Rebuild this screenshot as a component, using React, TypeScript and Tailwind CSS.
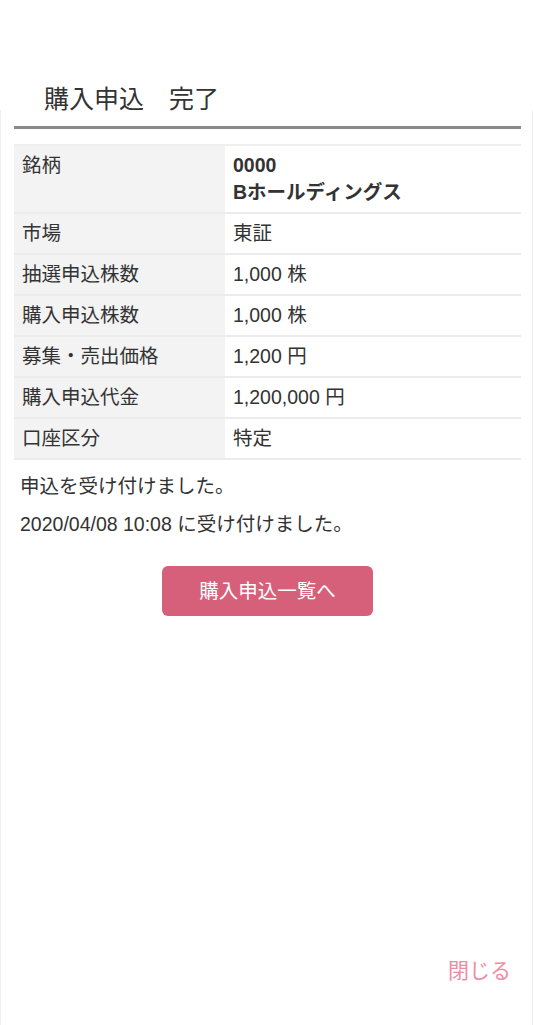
import React from 'react';

interface Row {
  label: string;
  value: React.ReactNode;
}

const rows: Row[] = [
  {
    label: '銘柄',
    value: (
      <span className="font-bold">
        0000
        <br />
        Bホールディングス
      </span>
    ),
  },
  { label: '市場', value: '東証' },
  { label: '抽選申込株数', value: '1,000 株' },
  { label: '購入申込株数', value: '1,000 株' },
  { label: '募集・売出価格', value: '1,200 円' },
  { label: '購入申込代金', value: '1,200,000 円' },
  { label: '口座区分', value: '特定' },
];

const font = { fontFamily: '"Liberation Sans", "Noto Sans CJK JP", sans-serif' };

export default function App() {
  return (
    <div className="min-h-[1025px] bg-white flex flex-col text-[#333]" style={font}>
      {/* Title */}
      <div className="h-[110px] pt-[84px] pl-[44px]">
        <h1 className="text-[25px] leading-[30px] font-normal text-[#333]">購入申込　完了</h1>
      </div>

      {/* Panel */}
      <div className="flex-1 flex flex-col border-x border-[#efefef] pl-[13px] pr-[11px]">
        <div className="mt-[16px] h-[3px] bg-[#8a8a8a]" />

        <div className="mt-[15px] border-t-2 border-[#efefef]">
          {rows.map(r => (
            <div key={r.label} className="grid grid-cols-[211px_1fr] border-b-2 border-[#ececec]">
              <div className="bg-[#f3f3f3] px-[8px] py-[6px] text-[19.5px] leading-[27px]">{r.label}</div>
              <div className="bg-white px-[8px] py-[6px] text-[19.5px] leading-[27px]">{r.value}</div>
            </div>
          ))}
        </div>

        {/* Messages */}
        <div className="mt-[13px] flex flex-col gap-[11px] px-[6px] text-[19.5px] leading-[27px]">
          <p>申込を受け付けました。</p>
          <p>2020/04/08 10:08 に受け付けました。</p>
        </div>

        <div className="mt-[28px] flex justify-center">
          <button className="w-[211px] h-[50px] rounded-[6px] bg-[#d6607a] text-white text-[19.5px] leading-[27px]">
            購入申込一覧へ
          </button>
        </div>

        {/* Close */}
        <div className="mt-auto flex justify-end pr-[10px] pb-[40px]">
          <span className="text-[21px] leading-[28px] text-[#ee8ca4]">閉じる</span>
        </div>
      </div>
    </div>
  );
}
